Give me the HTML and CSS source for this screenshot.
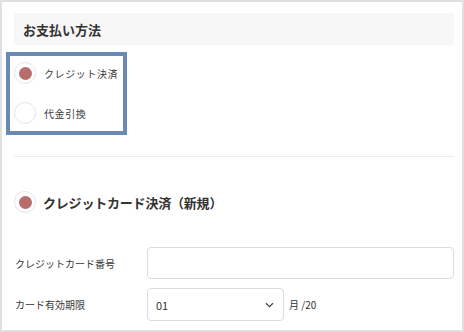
FILE: index.html
```html
<!DOCTYPE html>
<html lang="ja">
<head>
<meta charset="utf-8">
<link rel="stylesheet" href="styles.css">
</head>
<body>
<div class="frame">
  <div class="section-head">お支払い方法</div>
  <div class="radios">
    <div class="radio-row">
      <span class="radio checked"></span>
      <span class="radio-label">クレジット決済</span>
    </div>
    <div class="radio-row">
      <span class="radio"></span>
      <span class="radio-label">代金引換</span>
    </div>
    <div class="highlight"></div>
  </div>
  <div class="divider"></div>
  <div class="card-title">
    <span class="radio checked"></span>
    <span class="card-title-text">クレジットカード決済（新規）</span>
  </div>
  <div class="form">
    <div class="form-row">
      <div class="form-label">クレジットカード番号</div>
      <div class="input wide"></div>
    </div>
    <div class="form-row">
      <div class="form-label">カード有効期限</div>
      <div class="select">
        <span class="select-value">01</span>
        <svg class="chevron" width="9" height="6" viewBox="0 0 9 6"><polyline points="1,1.2 4.5,4.6 8,1.2" fill="none" stroke="#444" stroke-width="1.2"/></svg>
      </div>
      <span class="unit">月 /20</span>
    </div>
    <div class="form-row">
      <div class="form-label"></div>
      <div class="select"></div>
    </div>
  </div>
</div>
</body>
</html>
```

FILE: styles.css
```css
* { box-sizing: border-box; }
html, body { margin: 0; padding: 0; background: #fff; }
body {
  font-family: "Noto Sans CJK JP", "Noto Sans", sans-serif;
  color: #333;
}
.frame {
  width: 464px;
  height: 332px;
  border: 2px solid #e0e0e0;
  padding: 11px 8px 0 12px;
  overflow: hidden;
}
.section-head {
  height: 32px;
  background: #f7f7f7;
  display: flex;
  align-items: center;
  padding-left: 9px;
  font-size: 13px;
  font-weight: bold;
  color: #333;
}
.radios {
  position: relative;
  margin-top: 17px;
  display: flex;
  flex-direction: column;
  gap: 18px;
}
.radio-row {
  display: flex;
  align-items: center;
  gap: 8px;
  height: 22px;
}
.radio {
  width: 22px;
  height: 22px;
  border-radius: 50%;
  border: 1px solid #e6e6e6;
  display: flex;
  align-items: center;
  justify-content: center;
  flex: none;
}
.radio.checked::after {
  content: "";
  width: 13px;
  height: 13px;
  border-radius: 50%;
  background: #b86c6c;
}
.radio-label {
  font-size: 10px;
  letter-spacing: 0.6px;
  color: #3a3a3a;
}
.highlight {
  position: absolute;
  left: -8px;
  top: -10px;
  width: 121px;
  height: 83px;
  border: 4px solid #6a89b5;
}
.divider {
  margin-top: 32px;
  height: 1px;
  background: #ececec;
}
.card-title {
  margin-top: 34px;
  display: flex;
  align-items: center;
  gap: 7px;
  height: 22px;
}
.card-title-text {
  font-size: 13px;
  font-weight: bold;
  letter-spacing: -0.2px;
  color: #333;
}
.form {
  margin-top: 34px;
  display: flex;
  flex-direction: column;
  gap: 9px;
}
.form-row {
  display: flex;
  align-items: center;
}
.form-label {
  width: 133px;
  flex: none;
  padding-left: 1px;
  font-size: 10px;
  color: #3a3a3a;
}
.input {
  height: 32px;
  border: 1px solid #dcdcdc;
  border-radius: 4px;
}
.input.wide { flex: 1; }
.select {
  width: 137px;
  height: 33px;
  border: 1px solid #dcdcdc;
  border-radius: 4px;
  display: flex;
  align-items: center;
  justify-content: space-between;
  padding: 0 9px 0 8px;
}
.select-value {
  font-size: 11px;
  color: #333;
}
.chevron { display: block; }
.unit {
  margin-left: 5px;
  font-size: 10px;
  color: #333;
}
```
